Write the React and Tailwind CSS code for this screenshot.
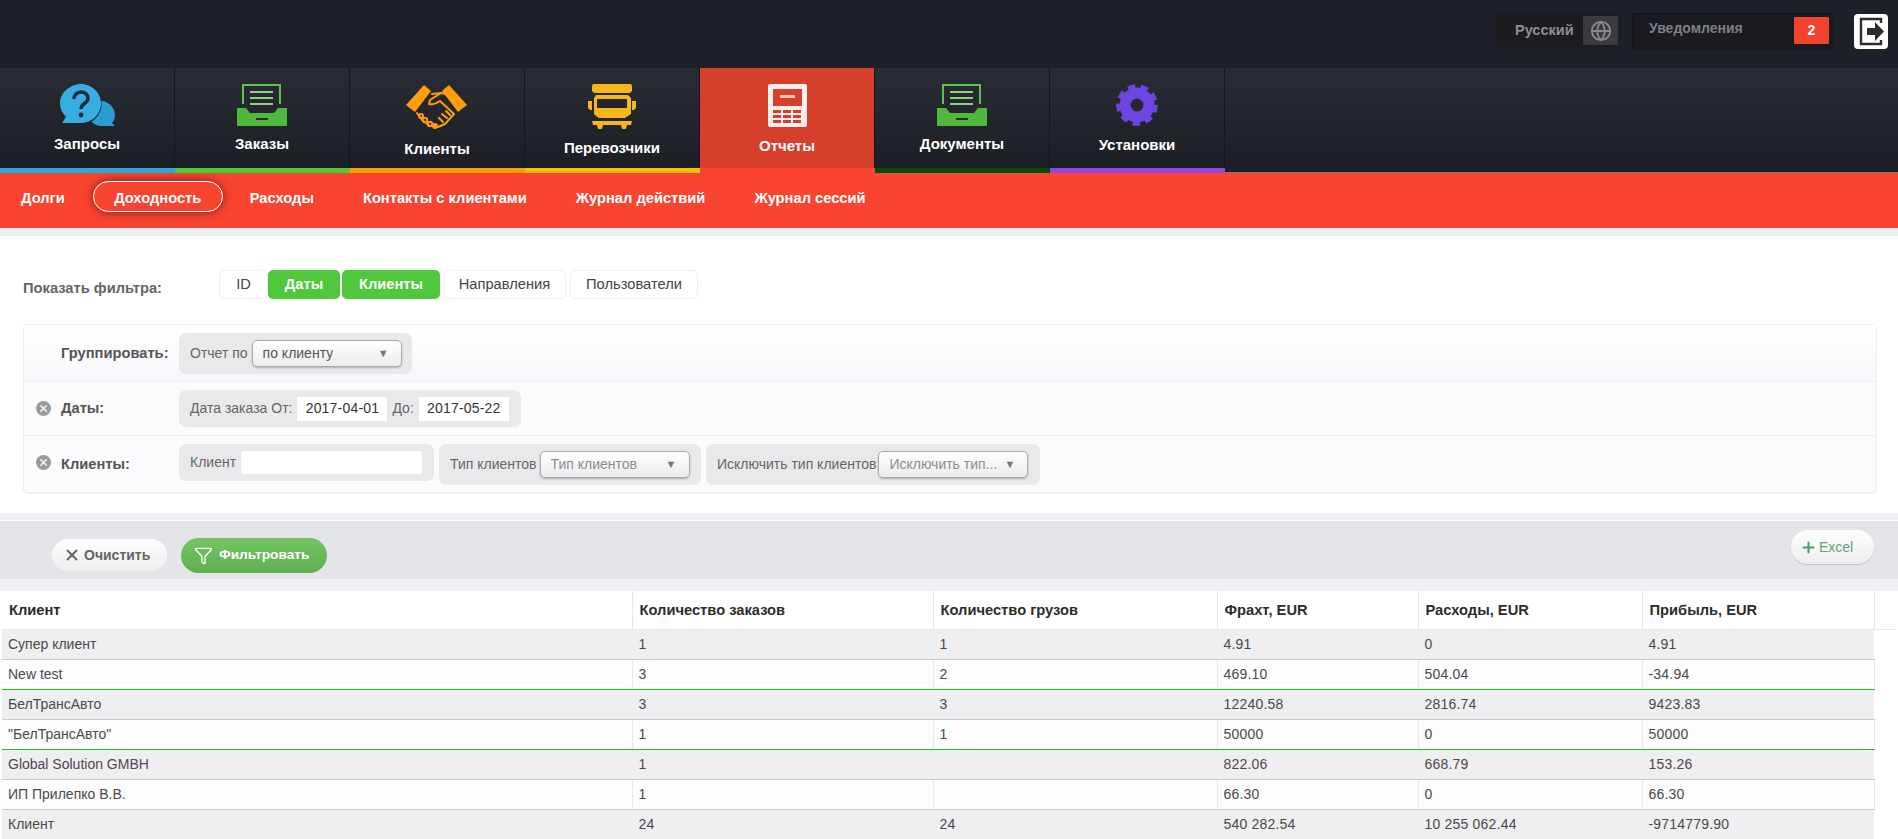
import React from 'react';
import { Globe, X, Plus, Filter } from 'lucide-react';

const TrayIcon = () => (
  <svg width="50" height="42" viewBox="0 0 50 42">
    <path d="M6 20V1h37v19" fill="none" stroke="#5cc24a" strokeWidth="2" />
    <path d="M13 8h23M13 14h23M13 20h23" stroke="#8ed07f" strokeWidth="2" />
    <path d="M0 24h9l4 5h24l4-5h9v17a1 1 0 0 1-1 1H1a1 1 0 0 1-1-1z" fill="#4fb83c" />
    <path d="M19 35h12" stroke="#2b2d33" strokeWidth="2" />
  </svg>
);

const QuestionIcon = () => (
  <svg width="55" height="42" viewBox="0 0 55 42">
    <path d="M36 17c10-2 19 5 19 14 0 3-1 6-3 8l3 3H42c-5 0-9-2-12-6z" fill="#2b9ccf" />
    <circle cx="21" cy="20" r="20.5" fill="#1f2229" />
    <path d="M21 0c11 0 20 9 20 19 0 11-9 20-20 20H2l4-6C2 29 0 24 0 19 0 9 10 0 21 0z" fill="#37aee2" />
    <path d="M14 15c0-4 3-7 7-7s7 3 7 6c0 6-7 5-7 11" fill="none" stroke="#1e2a38" strokeWidth="3.4" />
    <circle cx="21" cy="31" r="2.4" fill="#1e2a38" />
  </svg>
);

const HandshakeIcon = () => (
  <svg width="62" height="45" viewBox="0 0 62 45">
    <path d="M18 1l7 6L9 28 0 21z" fill="#ff9d0a" />
    <path d="M43 1l-7 6 16 21 9-7z" fill="#ff9d0a" />
    <g fill="none" stroke="#ff9d0a" strokeWidth="2" strokeLinejoin="round" strokeLinecap="round">
      <path d="M26 10l9-1-11 7-1 4c4 1 8-1 11-3l14 13-9 10-7 3" />
      <path d="M35 9l5 1" />
      <path d="M11 29l5 7 8 6h6" />
      <circle cx="15" cy="32" r="2" />
      <circle cx="19" cy="36" r="2.2" />
      <circle cx="24" cy="40" r="2.2" />
      <circle cx="29" cy="42" r="2" />
      <path d="M36 30l5 4M40 27l4 4M33 34l4 4" />
    </g>
  </svg>
);

const TruckIcon = () => (
  <svg width="50" height="45" viewBox="0 0 50 45">
    <path d="M6 0h38l1 2v5l-2 2H7L5 7V2z" fill="#f5b71a" />
    <path d="M9 11h32l3 3v16l-3 2-3 2H12l-3-2-2-2V14z" fill="#f5b71a" />
    <rect x="10" y="15" width="30" height="9" fill="#24262d" />
    <path d="M1 17h4v9H3l-2-2zM45 17h4v7l-2 2h-2z" fill="#f5b71a" />
    <path d="M5 37h40l-1 4h-4l-1 4h-4l-1-4H16l-1 4h-4l-1-4H6z" fill="#f5b71a" />
  </svg>
);

const CalcIcon = () => (
  <svg width="39" height="43" viewBox="0 0 39 43">
    <rect width="39" height="43" rx="2" fill="#f6efec" />
    <rect x="5" y="5" width="29" height="17" fill="#d63f2c" />
    <rect x="12" y="11" width="15" height="3" fill="#f6c7bd" />
    {[26, 31, 36].map((y) =>
      [5, 15, 25].map((x) => <rect key={`${x}-${y}`} x={x} y={y} width="8" height="3" fill="#d63f2c" />)
    )}
  </svg>
);

const GearIcon = () => (
  <svg width="42" height="42" viewBox="0 0 42 42">
    <circle cx="21" cy="21" r="12" fill="none" stroke="#6f45e2" strokeWidth="11" />
    <circle cx="21" cy="21" r="18" fill="none" stroke="#6f45e2" strokeWidth="5.5" strokeDasharray="7.2 5.37" />
  </svg>
);

const tabs = [
  { label: 'Запросы', icon: <QuestionIcon />, line: 'bg-[#29a9e0]', labelTop: 'mt-[6px]' },
  { label: 'Заказы', icon: <TrayIcon />, line: 'bg-[#4fc836]', labelTop: 'mt-[6px]' },
  { label: 'Клиенты', icon: <HandshakeIcon />, line: 'bg-[#ff9f00]', labelTop: 'mt-[11px]' },
  { label: 'Перевозчики', icon: <TruckIcon />, line: 'bg-[#f7c000]', labelTop: 'mt-[10px]' },
  { label: 'Отчеты', icon: <CalcIcon />, line: 'bg-[#f9442f]', labelTop: 'mt-[8px]', active: true },
  { label: 'Документы', icon: <TrayIcon />, line: 'bg-[#004f00]', labelTop: 'mt-[6px]' },
  { label: 'Установки', icon: <GearIcon />, line: 'bg-[#9146e4]', labelTop: 'mt-[7px]' },
];

const subItems = ['Долги', 'Доходность', 'Расходы', 'Контакты с клиентами', 'Журнал действий', 'Журнал сессий'];

const filterButtons = [
  { label: 'ID', w: 'w-[49px]' },
  { label: 'Даты', w: 'w-[72px]', on: true },
  { label: 'Клиенты', w: 'w-[98px] ml-[2px]', on: true },
  { label: 'Направления', w: 'w-[123px] ml-[3px]' },
  { label: 'Пользователи', w: 'w-[128px] ml-[4px]' },
];

const rows = [
  ['Супер клиент', '1', '1', '4.91', '0', '4.91'],
  ['New test', '3', '2', '469.10', '504.04', '-34.94'],
  ['БелТрансАвто', '3', '3', '12240.58', '2816.74', '9423.83'],
  ['"БелТрансАвто"', '1', '1', '50000', '0', '50000'],
  ['Global Solution GMBH', '1', '', '822.06', '668.79', '153.26'],
  ['ИП Прилепко В.В.', '1', '', '66.30', '0', '66.30'],
  ['Клиент', '24', '24', '540 282.54', '10 255 062.44', '-9714779.90'],
];

const rowBorders = [
  'border-b-[#c8c8ca]',
  'border-b-[#1fc01f]',
  'border-b-[#c8c8ca]',
  'border-b-[#1fc01f]',
  'border-b-[#c8c8ca]',
  'border-b-[#c8c8ca]',
  'border-b-transparent',
];

const headers = ['Клиент', 'Количество заказов', 'Количество грузов', 'Фрахт, EUR', 'Расходы, EUR', 'Прибыль, EUR'];

const Select = ({ text, width, muted }) => (
  <div className={`${width} h-[27px] flex items-center justify-between pl-[10px] pr-[12px] rounded-[5px] border border-[#a9a9ad] bg-gradient-to-b from-white to-[#ececee] shadow-[0_1px_2px_rgba(0,0,0,0.25)] text-[14px] ${muted ? 'text-[#8d8d8f]' : 'text-[#555]'}`}>
    <span className="truncate">{text}</span>
    <span className="text-[11px] text-[#777]">▼</span>
  </div>
);

const Group = ({ width, children }) => (
  <div className={`${width} flex items-center h-[37px] pl-[11px] rounded-[7px] bg-[#e9e9eb] text-[14px] text-[#666]`}>
    {children}
  </div>
);

const RemoveDot = () => (
  <div className="w-[15px] h-[15px] rounded-full bg-[#9a9a9c] flex items-center justify-center">
    <X size={11} strokeWidth={3.5} color="#f2f2f2" />
  </div>
);

export default function App() {
  return (
    <div className="w-[1898px] h-[839px] overflow-hidden bg-white font-['Liberation_Sans',Arial,sans-serif]">
      {/* Top bar */}
      <div className="h-[68px] bg-[#1e2029] flex justify-end items-start pt-[13px] pr-[10px]">
        <div className="flex items-center h-[33px] mt-[1px] w-[122px] bg-[#1b1b20] pl-[19px] justify-between">
          <span className="text-[14.5px] font-bold text-[#8e8e92]">Русский</span>
          <div className="w-[35px] h-[29px] bg-[#3a3b3f] flex items-center justify-center">
            <Globe size={22} color="#8a8a8e" />
          </div>
        </div>
        <div className="ml-[14px] w-[201px] h-[37px] bg-[#1a1b21] border-l-2 border-t-2 border-[#15161b] flex justify-between pl-[15px] pr-[4px] pt-[2px]">
          <span className="text-[14px] font-bold text-[#7f7f85] mt-[1px]">Уведомления</span>
          <div className="w-[35px] h-[27px] bg-[#f2432e] rounded-[1px] flex items-center justify-center text-white font-bold text-[14px]">2</div>
        </div>
        <div className="ml-[21px] mt-[1px] w-[34px] h-[35px] bg-white rounded-[4px] flex items-center justify-center">
          <svg width="28" height="29" viewBox="0 0 28 29">
            <path d="M24 6V2H4v25h20v-4" fill="none" stroke="#2b2d35" strokeWidth="2.4" />
            <path d="M10 11h8V5l9 9.5-9 9.5v-6h-8z" fill="#2b2d35" />
          </svg>
        </div>
      </div>

      {/* Main tabs */}
      <div className="flex h-[105px] bg-gradient-to-b from-[#2a2c35] to-[#1c1e25]">
        {tabs.map((tab) => (
          <div key={tab.label} className="w-[175px] flex flex-col">
            <div className={`h-[100px] flex flex-col items-center pt-[16px] border-r border-[#15161b] ${tab.active ? 'bg-[#d63f2c]' : ''}`}>
              <div className="h-[45px] flex items-start justify-center">{tab.icon}</div>
              <span className={`${tab.labelTop} text-[15px] font-bold text-white leading-[18px]`}>{tab.label}</span>
            </div>
            <div className={`h-[5px] ${tab.line}`} />
          </div>
        ))}
        <div className="flex-1 flex flex-col justify-end">
          <div className="h-[1px] bg-[#777a7d]" />
        </div>
      </div>

      {/* Sub nav */}
      <div className="h-[55px] bg-[#f9442f] flex items-center pl-[21px]">
        {subItems.map((item) =>
          item === 'Доходность' ? (
            <div key={item} className="ml-[28px] mr-[27px] w-[130px] h-[31px] -mt-[8px] pt-[3px] rounded-full border border-white flex items-center justify-center text-[14.7px] font-bold text-white shadow-[0_0_10px_rgba(60,20,20,0.7)]">
              {item}
            </div>
          ) : (
            <span key={item} className="mr-[49px] last:mr-0 first:mr-0 -mt-[4px] text-[14.7px] font-bold text-white">{item}</span>
          )
        )}
      </div>

      <div className="h-[8px] bg-[#eceef2]" />

      {/* Filters */}
      <div className="h-[277px] pl-[23px] pr-[21px] pt-[34px] bg-white">
        <div className="flex items-center h-[29px]">
          <span className="w-[196px] pt-[7px] text-[14.7px] font-bold text-[#666]">Показать фильтра:</span>
          {filterButtons.map((b) => (
            <div
              key={b.label}
              className={`${b.w} h-[29px] flex items-center justify-center rounded-[5px] text-[14.7px] ${b.on ? 'bg-[#4fc83c] text-white font-bold' : 'bg-white text-[#444] border border-[#efeff2]'}`}
            >
              {b.label}
            </div>
          ))}
        </div>

        <div className="mt-[25px] h-[170px] border border-[#eeeef1] border-b-2 rounded-[5px] bg-[#fbfbfd] flex flex-col">
          <div className="h-[57px] flex items-center border-b border-[#eeeef1] bg-gradient-to-b from-white to-[#f7f7fb]">
            <span className="w-[155px] pl-[37px] text-[14.7px] font-bold text-[#555] shrink-0">Группировать:</span>
            <div className="w-[233px] h-[41px] flex items-center pl-[11px] rounded-[7px] bg-[#e9e9eb] text-[14px] text-[#666]">
              <span className="mr-[4px]">Отчет по</span>
              <Select text="по клиенту" width="w-[150px]" />
            </div>
          </div>
          <div className="h-[54px] flex items-center border-b border-[#eeeef1]">
            <div className="w-[37px] pl-[12px] shrink-0"><RemoveDot /></div>
            <span className="w-[118px] text-[14.7px] font-bold text-[#555] shrink-0">Даты:</span>
            <Group width="w-[342px]">
              <span className="mr-[5px]">Дата заказа От:</span>
              <div className="w-[90px] h-[24px] bg-white flex items-center justify-center text-[#333] tracking-[0.2px]">2017-04-01</div>
              <span className="ml-[5px] mr-[5px]">До:</span>
              <div className="w-[90px] h-[24px] bg-white flex items-center justify-center text-[#333] tracking-[0.2px]">2017-05-22</div>
            </Group>
          </div>
          <div className="flex-1 flex items-start pt-[8px]">
            <div className="w-[37px] pl-[12px] pt-[11px] shrink-0"><RemoveDot /></div>
            <span className="w-[118px] pt-[9px] text-[14.7px] font-bold text-[#555] shrink-0">Клиенты:</span>
            <Group width="w-[255px]">
              <span className="mr-[5px]">Клиент</span>
              <div className="w-[181px] h-[23px] bg-white rounded-[3px]" />
            </Group>
            <div className="ml-[5px] w-[262px] h-[41px] flex items-center pl-[11px] rounded-[7px] bg-[#e9e9eb] text-[14px] text-[#666]">
              <span className="mr-[3px] whitespace-nowrap">Тип клиентов</span>
              <Select text="Тип клиентов" width="w-[150px]" muted />
            </div>
            <div className="ml-[5px] w-[334px] h-[41px] flex items-center pl-[11px] rounded-[7px] bg-[#e9e9eb] text-[14px] text-[#666]">
              <span className="mr-[2px] whitespace-nowrap">Исключить тип клиентов</span>
              <Select text="Исключить тип..." width="w-[150px]" muted />
            </div>
          </div>
        </div>
      </div>

      {/* Action bar */}
      <div className="h-[7px] bg-[#eef0f4]" />
      <div className="h-[59px] bg-[#e4e5e9] border-t border-white flex items-start pl-[52px] pr-[24px] pt-[17px] relative">
        <div className="w-[115px] h-[32px] mt-[1px] rounded-full bg-gradient-to-b from-white to-[#eeeeef] flex items-center pl-[11px] text-[14px] font-bold text-[#666]">
          <X size={18} color="#666" strokeWidth={2.5} />
          <span className="ml-[3px]">Очистить</span>
        </div>
        <div className="ml-[14px] w-[146px] h-[35px] rounded-full bg-gradient-to-b from-[#74c664] to-[#5fae50] flex items-center pl-[13px] text-[13.7px] font-bold text-white">
          <Filter size={19} color="#fff" strokeWidth={1.8} />
          <span className="ml-[6px]">Фильтровать</span>
        </div>
        <div className="ml-auto -mt-[8px] w-[83px] h-[34px] rounded-full bg-gradient-to-b from-white to-[#eeeeef] shadow-[0_1px_1px_rgba(0,0,0,0.15)] flex items-center pl-[9px] text-[14px] text-[#5fa47a]">
          <Plus size={17} color="#4f9d6c" strokeWidth={3} />
          <span className="ml-[2px]">Excel</span>
        </div>
      </div>
      <div className="h-[12px] bg-[#eef0f5]" />

      {/* Report table */}
      <div className="pl-[2px] relative">
        <table className="table-fixed w-[1894px] border-collapse text-[14px] text-[#4a4a4a]">
          <colgroup>
            <col className="w-[630px]" />
            <col className="w-[301px]" />
            <col className="w-[284px]" />
            <col className="w-[201px]" />
            <col className="w-[224px]" />
            <col className="w-[232px]" />
            <col className="w-[22px]" />
          </colgroup>
          <thead>
            <tr className="h-[38px] bg-white border-b border-[#e8e8ea]">
              {headers.map((h) => (
                <th key={h} className="px-[7px] text-left text-[14.7px] font-bold text-[#2c2c2c] border-r border-[#e8e8ea]">{h}</th>
              ))}
              <th />
            </tr>
          </thead>
          <tbody>
            {rows.map((row, i) => (
              <tr key={i}>
                {row.map((cell, j) => (
                  <td
                    key={j}
                    className={`h-[30px] px-[6px] border-b border-r ${j > 0 ? 'tracking-[0.2px]' : ''} ${rowBorders[i]} ${i % 2 === 0 ? 'bg-[#efeef0] border-r-transparent' : 'bg-[#fdfdff] border-r-[#e8e8ea]'}`}
                  >
                    {cell}
                  </td>
                ))}
                <td className="border-l border-[#e8e8ea]" />
              </tr>
            ))}
          </tbody>
        </table>
      </div>
    </div>
  );
}
